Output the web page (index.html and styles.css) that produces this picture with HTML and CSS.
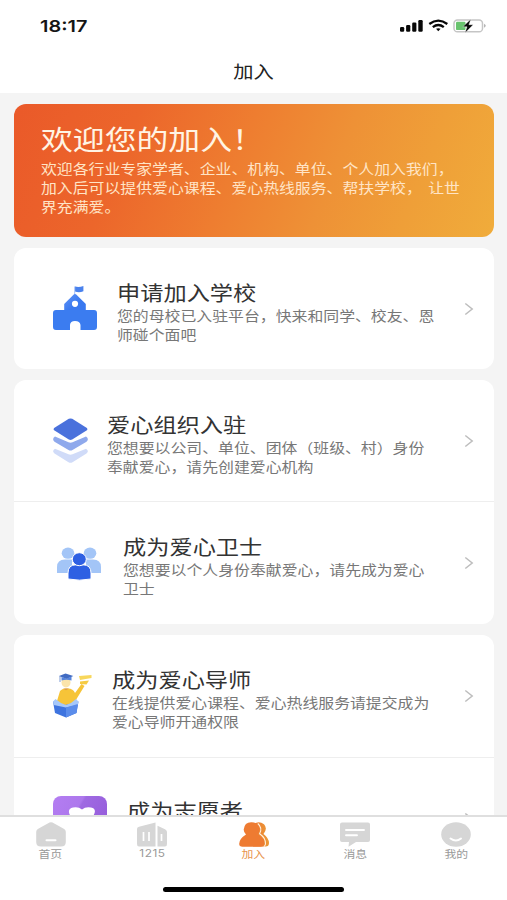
FILE: index.html
```html
<!DOCTYPE html>
<html lang="zh-CN">
<head>
<meta charset="utf-8">
<title>加入</title>
<link rel="stylesheet" href="styles.css">
</head>
<body>
<div class="app">
  <header class="header">
    <div class="status">
      <span class="time">18:17</span>
      <svg class="signals" width="88" height="16" viewBox="0 0 88 16">
        <g fill="#080808">
          <rect x="1" y="9" width="4.2" height="4.8" rx="1.2"/>
          <rect x="7.1" y="7" width="4.2" height="6.8" rx="1.2"/>
          <rect x="13.2" y="4.5" width="4.2" height="9.3" rx="1.2"/>
          <rect x="19.3" y="2" width="4.4" height="11.8" rx="1.2"/>
          <path d="M37 10.7 Q39.3 9.7 41.6 10.7 L39.3 13.3Z"/>
        </g>
        <g fill="none" stroke="#080808" stroke-width="2.3">
          <path d="M30.3 6Q39.3-.8 48.3 6"/>
          <path d="M33.8 9.2Q39.3 4.8 44.8 9.2"/>
        </g>
        <rect x="55" y="2" width="28.5" height="11.8" rx="3.4" fill="#fff" stroke="#c5c5c5" stroke-width="1.5"/>
        <path d="M85 5.7Q88.5 7.8 85 9.8Z" fill="#b5b5b5"/>
        <rect x="57" y="3.8" width="9.5" height="8.3" rx="1.2" fill="#69c46f"/>
        <path d="M72 1 63.8 8.8H68L66 15 74.2 6.7H69.9Z" fill="#080808" stroke="#fff" stroke-width=".4"/>
      </svg>
    </div>
    <h1 class="page-title"><span class="wide center">加入</span></h1>
  </header>

  <main class="content">
    <section class="hero">
      <h2 class="hero-title wide">欢迎您的加入！</h2>
      <p class="hero-text wide">欢迎各行业专家学者、企业、机构、单位、个人加入我们，<br>加入后可以提供爱心课程、爱心热线服务、帮扶学校，<span class="gap"> </span>让世<br>界充满爱。</p>
    </section>

    <section class="card">
      <div class="row">
        <svg class="icon icon-school" viewBox="0 0 44 46">
          <defs><linearGradient id="school" x1="0" y1="0" x2="1" y2="1"><stop stop-color="#6295f7"/><stop offset=".55" stop-color="#3978ef"/></linearGradient></defs>
          <path d="M22 1.6Q26 2.8 30.4 1V6.3Q26 8 22 6.5Z" fill="#4a82ed"/>
          <path d="M21.7 1.5V10" stroke="#a4c1f7" stroke-width="1"/>
          <path d="M11.2 28V19L20.5 9.7Q22 8.5 23.5 9.7L32.8 19V28Z" fill="url(#school)"/>
          <path d="M3 25H41Q44 25 44 28V41.7Q44 44.9 41 44.9H27.5V40Q27 36 22 36Q17.3 36 17 40V44.9H3Q0 44.9 0 41.7V28Q0 25 3 25Z" fill="#3b7cf0"/>
          <circle cx="22" cy="18.8" r="3.1" fill="#fff"/>
        </svg>
        <div class="copy"><h3 class="title wide">申请加入学校</h3><p class="text wide">您的母校已入驻平台，快来和同学、校友、恩<br>师碰个面吧</p></div>
        <svg class="chevron" viewBox="0 0 10 14"><path d="M1.3 1.5 8.2 7 1.3 12.5"/></svg>
      </div>
    </section>

    <section class="card">
      <div class="row">
        <svg class="icon icon-layers" viewBox="0 0 35 46">
          <path d="M2 30.7 15.5 36.3Q17.5 37 19.5 36.3L33 30.7Q36.5 33 33.5 35.5L19.5 44.2Q17.5 45.4 15.5 44.2L1.5 35.5Q-1.5 33 2 30.7Z" fill="#d0dbf8"/>
          <path d="M2 18.5 15.5 24.3Q17.5 25.2 19.5 24.3L33 18.5Q36.5 21 33.5 23.7L19.5 32Q17.5 33.2 15.5 32L1.5 23.7Q-1.5 21 2 18.5Z" fill="#8fa9ec"/>
          <path d="M15.8.8Q17.5 0 19.2.8L33.5 9.8Q35.3 11.2 33.5 12.6L19.2 21.5Q17.5 22.4 15.8 21.5L1.5 12.6Q-.3 11.2 1.5 9.8Z" fill="#4a71dc"/>
        </svg>
        <div class="copy"><h3 class="title wide">爱心组织入驻</h3><p class="text wide">您想要以公司、单位、团体（班级、村）身份<br>奉献爱心，请先创建爱心机构</p></div>
        <svg class="chevron" viewBox="0 0 10 14"><path d="M1.3 1.5 8.2 7 1.3 12.5"/></svg>
      </div>
      <div class="row">
        <svg class="icon icon-people" viewBox="0 0 44 34">
          <g fill="#a3c5f7"><ellipse cx="11" cy="6.2" rx="6.3" ry="5.6"/><ellipse cx="33" cy="6.2" rx="6.3" ry="5.6"/><path d="M0 26V20Q0 12.5 8 12.5H15V26Z"/><path d="M44 26V20Q44 12.5 36 12.5H29V26Z"/></g>
          <g fill="#2e60e3" stroke="#fff" stroke-width="1"><path d="M11 32V26Q11 17.8 19 17.8H26Q34 17.8 34 26V32Q22.5 34.3 11 32Z"/><ellipse cx="22.3" cy="12.2" rx="7" ry="6.5"/></g>
        </svg>
        <div class="copy"><h3 class="title wide">成为爱心卫士</h3><p class="text wide">您想要以个人身份奉献爱心，请先成为爱心<br>卫士</p></div>
        <svg class="chevron" viewBox="0 0 10 14"><path d="M1.3 1.5 8.2 7 1.3 12.5"/></svg>
      </div>
    </section>

    <section class="card card-open">
      <div class="row row-tutor">
        <svg class="icon icon-tutor" viewBox="0 0 39 46">
          <path d="M26 3 38.5 2V5L27 7Z" fill="#f8d75b"/>
          <path d="M27 8.5 36 7.5 33.5 11.5 27 11Z" fill="#f5cb43"/>
          <path d="M4 28 7 18Q9 15 14 15.5Q20 15 22 20L28.5 11 31.5 13 23.5 26 21 32H6Z" fill="#f6c438"/>
          <ellipse cx="13" cy="9.5" rx="4.5" ry="5" fill="#fbe4ab"/>
          <path d="M10 15.5 13 17.3 16 15.5Z" fill="#d99a55"/>
          <path d="M6 3 12.5.5 20.3 3 13.5 6Z" fill="#416bc2"/><path d="M8.5 4 13.5 5.5 18.5 3.5V7.4Q13.5 6 8.5 7.4Z" fill="#5684dc"/><path d="M7 3V9" stroke="#5b82ca" stroke-width=".8"/>
          <path d="M0 28.5 12.5 32 25.5 28.5 23.5 40 13 44.5 2 40Z" fill="#3e74df"/>
          <path d="M0 28.5 2.5 26 8 30 13 32 18 30 23 26 25.5 28.5 24.8 32 13 34.5 .7 32Z" fill="#a6c8fa"/>
          <path d="M13 34.5 24.8 31 23.5 40 13 44.5Z" fill="#5b8deb"/>
        </svg>
        <div class="copy"><h3 class="title wide">成为爱心导师</h3><p class="text wide">在线提供爱心课程、爱心热线服务请提交成为<br>爱心导师开通权限</p></div>
        <svg class="chevron" viewBox="0 0 10 14"><path d="M1.3 1.5 8.2 7 1.3 12.5"/></svg>
      </div>
      <div class="row row-single">
        <svg class="icon icon-heart" viewBox="0 0 54 46">
          <defs><linearGradient id="purple" x1="0" y1="0" x2="1" y2=".5"><stop stop-color="#b47df2"/><stop offset=".46" stop-color="#ad78ec"/><stop offset=".5" stop-color="#9f6ae2"/><stop offset="1" stop-color="#965ddb"/></linearGradient></defs>
          <rect width="54" height="46" rx="8" fill="url(#purple)"/>
          <path d="M28.5 33 18 21Q13 13 20 11.5Q25.5 10.5 29 13.4Q32.5 10.5 38 11.5Q45 13 39.5 21Z" fill="#fff"/>
        </svg>
        <div class="copy"><h3 class="title wide">成为志愿者</h3></div>
        <svg class="chevron" viewBox="0 0 10 14"><path d="M1.3 1.5 8.2 7 1.3 12.5"/></svg>
      </div>
    </section>
  </main>

  <footer class="footer">
    <nav class="tabs">
      <div class="tab">
        <svg class="tab-icon" viewBox="0 0 30 25"><path d="M13.5.6Q15 0 16.5.6L28.2 7Q29.8 8 29.8 10V20Q29.8 24.5 25 24.5H5Q.2 24.5.2 20V10Q.2 8 1.8 7Z" fill="#d6d6d6"/><path d="M10.5 18.3H19.5" stroke="#fff" stroke-width="2" stroke-linecap="round"/></svg>
        <span class="label wide center">首页</span>
      </div>
      <div class="tab">
        <svg class="tab-icon" viewBox="0 0 30 25"><path d="M2 4.8 18.5.6V24.5H2Q0 24.5 0 22V7Q0 5.2 2 4.8ZM20.5 3.8 28 7.3Q30 8.3 30 10V22Q30 24.5 28 24.5H20.5Z" fill="#d6d6d6"/><path d="M6.5 10V19M12 10V19M24.5 12V19" stroke="#fff" stroke-width="1.7"/></svg>
        <span class="label digits wide center">1215</span>
      </div>
      <div class="tab active">
        <svg class="tab-icon" viewBox="0 0 30 25">
          <defs><linearGradient id="join"><stop stop-color="#ed7934"/><stop offset="1" stop-color="#eb9a35"/></linearGradient></defs>
          <path d="M15 1.8Q20-1.5 25 2.2Q29 6.5 24.5 12Q29.8 16 30 21Q30 24.5 26.5 24.5H14Z" fill="url(#join)"/>
          <path d="M4.7 7.5Q5.5 0 12.5.2Q20 .3 20.5 7Q20.4 10 18.5 12.5Q25.5 16 25.5 21.5Q25.2 24.8 21.5 24.8H3.5Q.2 24.8.2 22Q0 17 7 12.5Q4.5 10 4.7 7.5Z" fill="#ee7b32"/>
          <path d="M18.8 1.5Q23.8 6 20.6 11.8Q26.8 16 26.5 22Q26.2 23.5 25 24.5" fill="none" stroke="#fff1df" stroke-width="1.1"/>
        </svg>
        <span class="label wide center">加入</span>
      </div>
      <div class="tab">
        <svg class="tab-icon" viewBox="0 0 30 25"><path d="M2 .5H28Q30 .5 30 2.5V18Q30 20 28 20H16L8.5 24.8 9 20H2Q0 20 0 18V2.5Q0 .5 2 .5Z" fill="#d6d6d6"/><path d="M6 8H24M6 13.2H17" stroke="#fff" stroke-width="1.9" stroke-linecap="round"/></svg>
        <span class="label wide center">消息</span>
      </div>
      <div class="tab">
        <svg class="tab-icon" viewBox="0 0 30 25"><ellipse cx="15" cy="12.5" rx="14.8" ry="12.2" fill="#d6d6d6"/><path d="M9.5 16.5Q15 20.5 20 16.5" fill="none" stroke="#fff" stroke-width="2" stroke-linecap="round"/></svg>
        <span class="label wide center">我的</span>
      </div>
    </nav>
    <div class="home-bar"></div>
  </footer>
</div>
</body>
</html>
```
FILE: styles.css
```css
* { box-sizing: border-box; }
body, h1, h2, h3, p { margin: 0; font-weight: 400; }
body { background: #fff; font-family: "Noto Sans CJK SC", sans-serif; }
.app { width: 507px; height: 900px; display: flex; flex-direction: column; overflow: hidden; }

/* Lettering is set slightly extended throughout */
.wide { transform: scaleX(1.15); transform-origin: left center; white-space: nowrap; }
.center { display: inline-block; transform-origin: center; }

.header { height: 93px; flex: none; }
.status { height: 51px; padding: 0 20px 0 40px; display: flex; align-items: center; justify-content: space-between; }
.time { font: 600 16.6px/20px Inter, sans-serif; color: #151515; transform: scaleX(1.2); transform-origin: left center; }
.signals { display: block; }
.page-title { height: 42px; line-height: 39px; font-size: 17.6px; color: #222; text-align: center; }

.content { flex: 1; min-height: 0; overflow: hidden; background: #f4f4f4; padding: 11px 13px 0 14px; display: flex; flex-direction: column; gap: 11px; }
.hero { height: 133px; flex: none; border-radius: 12px; padding: 16px 0 0 27px; color: #fff4e4; background: linear-gradient(112deg, #ea5929 0%, #ec662b 24%, #ee7d30 46%, #ee9136 65%, #ef9f38 82%, #f0ac3b 100%); }
.hero-title { font-size: 27.7px; line-height: 36px; }
.hero-text { margin-top: 3px; font-size: 13.8px; line-height: 19.2px; color: #ffe4c6; }
.gap { margin-right: 2.5px; }

.card { flex: none; background: #fff; border-radius: 12px; }
.card-open { border-radius: 12px 12px 0 0; }
.row { height: 121px; display: flex; align-items: flex-start; padding: 0 20px 0 39px; }
.row + .row { height: 123px; border-top: 1px solid #eee; }
.row-tutor { height: 122px; }
.copy { flex: 1; margin-left: 20px; padding-top: 31px; }
.title { font-size: 20.2px; line-height: 27px; color: #333; }
.text { font-size: 13.8px; line-height: 19.2px; color: #777; }
.row-single .copy { padding-top: 39px; }
.icon { flex: none; display: block; }
.icon-school { width: 44px; height: 46px; margin-top: 37px; }
.icon-layers { width: 35px; height: 46px; margin: 38px -1px 0 0; }
.icon-people { width: 44px; height: 34px; margin: 45px 2px 0 4px; }
.icon-tutor { width: 39px; height: 46px; margin-top: 38px; }
.icon-heart { width: 54px; height: 46px; margin-top: 38px; }
.chevron { flex: none; width: 10px; height: 14px; margin-top: 54px; fill: none; stroke: #bdbdbd; stroke-width: 1.5; }

.footer { height: 85px; flex: none; background: #fff; border-top: 2px solid #dfdfdf; }
.tabs { height: 70px; display: flex; }
.tab { flex: 1; display: flex; flex-direction: column; align-items: center; padding-top: 5px; color: #999; }
.tab-icon { width: 30px; height: 25px; }
.label { font-size: 10.3px; line-height: 13px; }
.digits { font-family: Inter, sans-serif; letter-spacing: .5px; }
.active { color: #e8954d; }
.home-bar { width: 181px; height: 5px; margin: 0 auto; border-radius: 3px; background: #000; }
```
